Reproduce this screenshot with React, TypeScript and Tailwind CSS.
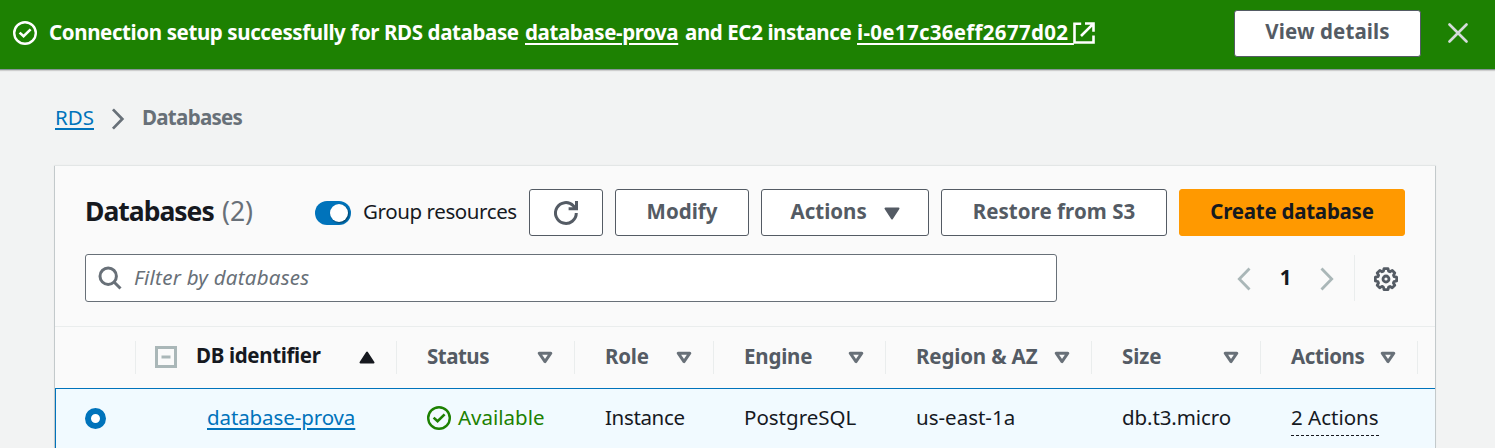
import type { ReactNode } from 'react';

function CheckCircle({ className }: { className: string }) {
  return (
    <svg viewBox="0 0 24 24" className={className} fill="none" stroke="currentColor">
      <circle cx="12" cy="12" r="10.8" strokeWidth="2.4" />
      <path d="M6.6 11.6 10.6 15.3 17.6 8.4" strokeWidth="2.6" />
    </svg>
  );
}

function Chevron({ className, flip = false, width = 3 }: { className: string; flip?: boolean; width?: number }) {
  return (
    <svg viewBox="0 0 14 24" className={className} fill="none" stroke="currentColor" strokeWidth={width}>
      <path d={flip ? 'M12.5 1.5 2.3 12 12.5 22.5' : 'M1.5 1.5 11.7 12 1.5 22.5'} />
    </svg>
  );
}

function SortDown() {
  return (
    <svg viewBox="0 0 16 13" className="h-[13px] w-4 shrink-0 text-[#687078]" fill="none" stroke="currentColor" strokeWidth="3" strokeLinejoin="round">
      <path d="M2.2 2.2H13.8L8 10.6Z" />
    </svg>
  );
}

function Button({ children, className }: { children: ReactNode; className: string }) {
  return (
    <button className={`flex h-[47px] shrink-0 items-center justify-center whitespace-nowrap rounded-[3px] border pb-[2px] text-[20.5px] font-bold ${className}`}>
      {children}
    </button>
  );
}

const outline = 'border-[#545b64] bg-white text-[#545b64]';

const columns = [
  { name: 'Status', style: 'tracking-[-0.5px]' },
  { name: 'Role', style: 'tracking-[-0.2px]' },
  { name: 'Engine', style: 'tracking-[-0.2px]' },
  { name: 'Region & AZ', style: 'tracking-[-0.15px]' },
  { name: 'Size', style: 'tracking-[-0.1px]' },
  { name: 'Actions', style: 'tracking-[-0.4px]' },
];

const grid = 'grid grid-cols-[81px_261px_178px_139px_172px_206px_169px_157px_17px]';

export default function App() {
  return (
    <div className="flex h-[448px] w-[1495px] flex-col overflow-hidden bg-[#f2f3f3] font-['Noto_Sans','Open_Sans',sans-serif] text-[20.5px] text-[#16191f]">
      <header className="flex h-[70px] shrink-0 items-center border-b border-[#879596] bg-[#1d8102] pl-[13px] pb-[3px] font-bold text-white shadow-[0_1px_1px_rgba(0,0,0,0.15)]">
        <CheckCircle className="mr-[12px] h-6 w-6 shrink-0" />
        <p className="flex whitespace-nowrap pb-[2px]">
          <span className="w-[476px] tracking-[-0.39px]">Connection setup successfully for RDS database</span>
          <a className="w-[154px] tracking-[-0.4px] underline decoration-2 underline-offset-[3px]">database-prova</a>
          <span className="w-[178px] pl-[6px] tracking-[-0.4px]">and EC2 instance</span>
          <a className="w-[216px] whitespace-pre tracking-[0.3px] underline decoration-2 underline-offset-[3px]">i-0e17c36eff2677d02 </a>
        </p>
        <svg viewBox="0 0 22 22" className="h-[22px] w-[22px] shrink-0" fill="none" stroke="currentColor" strokeWidth="2.6">
          <path d="M8.2 1.8H1.5V20.5H20.5V13.4M12 1.5H20.5V9.8M20.2 1.8 8 14" />
        </svg>
        <Button className={`ml-[139px] w-[187px] ${outline}`}>
          <span className="pb-[2px] tracking-[0.1px]">View details</span>
        </Button>
        <svg viewBox="0 0 20 20" className="ml-[27px] h-5 w-5 text-[#d5dbdb]" fill="none" stroke="currentColor" strokeWidth="2.6" strokeLinecap="round">
          <path d="M1.5 1.5 18.5 18.5M18.5 1.5 1.5 18.5" />
        </svg>
      </header>

      <nav className="flex h-[96px] shrink-0 items-center whitespace-nowrap pl-[55px]">
        <a className="pb-[2px] text-[#0073bb] underline decoration-2 underline-offset-[3px]">RDS</a>
        <Chevron className="ml-[17px] mt-[2px] h-[22px] w-[14px] text-[#687078]" />
        <span className="ml-[17px] pb-[2px] font-bold tracking-[-0.7px] text-[#687078]">Databases</span>
      </nav>

      <main className="ml-[54px] h-[282px] w-[1382px] border-x border-[#c3c9cb] bg-[#fafafa] shadow-[0_-1px_1px_rgba(0,28,36,0.06)]">
        <div className="flex h-[70px] items-end pl-[30px] whitespace-nowrap">
          <h1 className="flex h-[47px] w-[230px] items-center pb-[2px] text-[26.5px]">
            <span className="w-[137px] font-bold tracking-[-1px]">Databases</span>
            <span className="text-[#687078]">(2)</span>
          </h1>
          <div className="flex h-[47px] w-[214px] items-center">
            <span className="flex h-6 w-9 items-center justify-end rounded-full bg-[#0073bb] pr-[3px]">
              <span className="h-[18px] w-[18px] rounded-full bg-white shadow-[1px_1px_2px_rgba(0,28,36,0.6)]" />
            </span>
            <span className="ml-3 pb-[2px] tracking-[-0.4px]">Group resources</span>
          </div>
          <div className="flex gap-3">
            <Button className={`w-[74px] ${outline}`}>
              <svg viewBox="0 0 24 24" className="mt-[2px] h-6 w-6" fill="none" stroke="currentColor" strokeWidth="3">
                <path d="M22.3 11.9A10.4 10.4 0 1 1 19.3 4.7L22 7.5M22.5 0V7.8H14.6" />
              </svg>
            </Button>
            <Button className={`w-[134px] ${outline}`}>Modify</Button>
            <Button className={`w-[168px] ${outline}`}>
              <span className="w-[92px] text-left">Actions</span>
              <svg viewBox="0 0 16 13" className="ml-px mt-[3px] h-[13px] w-4" fill="currentColor" stroke="currentColor" strokeWidth="2" strokeLinejoin="round">
                <path d="M1.5 1.5H14.5L8 11.5Z" />
              </svg>
            </Button>
            <Button className={`w-[226px] tracking-[0.05px] ${outline}`}>Restore from S3</Button>
            <Button className="w-[226px] border-[#ff9900] bg-[#ff9900] tracking-[-0.25px] text-[#16191f]">Create database</Button>
          </div>
        </div>

        <div className="mt-[18px] flex h-12 items-center pl-[30px]">
          <div className="flex h-12 w-[972px] items-center rounded-[3px] border border-[#687078] bg-white pl-[12px] text-[#687078]">
            <svg viewBox="0 0 24 24" className="h-6 w-6" fill="none" stroke="currentColor" strokeWidth="3">
              <circle cx="10.2" cy="10.2" r="8.2" />
              <path d="m16 16 6.5 6.5" />
            </svg>
            <span className="ml-[12px] whitespace-nowrap pb-[2px] italic tracking-[0.25px]">Filter by databases</span>
          </div>
          <Chevron flip width={2.8} className="ml-[180px] mt-[2px] h-6 w-[14px] text-[#aab7b8]" />
          <span className="w-[69px] pb-[2px] text-center font-bold">1</span>
          <Chevron width={2.8} className="mt-[2px] h-6 w-[14px] text-[#aab7b8]" />
          <span className="ml-5 h-[46px] w-px bg-[#eaeded]" />
          <svg viewBox="0 0 24 24" className="ml-[19px] mt-[2px] h-6 w-6 text-[#545b64]" fill="none" stroke="currentColor" strokeWidth="2.8" strokeLinejoin="round">
            <path d="M10 1.6h4l.6 2.6 1.4.6 2.3-1.4 2.5 2.5-1.3 2.3.6 1.4 2.5.6v3.8l-2.6.6-.6 1.4 1.4 2.3-2.6 2.5-2.2-1.3-1.4.6-.6 2.5h-4l-.6-2.6-1.4-.6-2.3 1.4-2.5-2.5 1.3-2.3-.6-1.4-2.5-.6v-3.8l2.6-.6.6-1.4-1.4-2.3 2.6-2.5L8 4.8l1.4-.6Z" />
            <circle cx="12" cy="12" r="3" />
          </svg>
        </div>

        <div className={`mt-6 h-[62px] border-t border-[#eaeded] pt-[14px] ${grid}`}>
          <div className="h-[33px] border-r border-[#eaeded]" />
          <div className="flex h-[33px] items-center whitespace-nowrap border-r border-[#eaeded] pl-[19px] pr-[21px] font-bold">
            <svg viewBox="0 0 22 22" className="mb-[2px] h-[22px] w-[22px] text-[#aab7b8]" fill="none" stroke="currentColor" strokeWidth="3">
              <path d="M1.5 1.5h19v19h-19zM6.5 11h9" />
            </svg>
            <span className="ml-[19px] pb-[4px] tracking-[-0.35px]">DB identifier</span>
            <svg viewBox="0 0 16 13" className="ml-auto h-[13px] w-4" fill="currentColor" stroke="currentColor" strokeWidth="2" strokeLinejoin="round">
              <path d="M1.5 11.5H14.5L8 1.5Z" />
            </svg>
          </div>
          {columns.map((c) => (
            <div key={c.name} className="flex h-[33px] items-center justify-between whitespace-nowrap border-r border-[#eaeded] pl-[30px] pr-[21px] font-bold text-[#545b64]">
              <span className={`pb-[2px] ${c.style}`}>{c.name}</span>
              <SortDown />
            </div>
          ))}
        </div>

        <div className={`h-[60px] items-center whitespace-nowrap border-l border-t border-[#0073bb] bg-[#f1faff] ${grid}`}>
          <div className="pl-[29px]">
            <span className="block h-[21px] w-[21px] rounded-full border-[6.5px] border-[#0073bb] bg-white" />
          </div>
          <a className="pb-[2px] pl-[70px] tracking-[-0.1px] text-[#0073bb] underline decoration-2 underline-offset-[3px]">database-prova</a>
          <div className="flex items-center pb-[2px] pl-[29px] text-[#1d8102]">
            <CheckCircle className="mr-[7px] h-6 w-6 shrink-0" />
            <span>Available</span>
          </div>
          <div className="pb-[2px] pl-[29px] tracking-[-0.35px]">Instance</div>
          <div className="pb-[2px] pl-[29px]">PostgreSQL</div>
          <div className="pb-[2px] pl-[29px]">us-east-1a</div>
          <div className="pb-[2px] pl-[29px] tracking-[-0.1px]">db.t3.micro</div>
          <div className="pl-[29px]">
            <span className="inline-block h-[34px] w-[88px] border-b border-dashed border-[#16191f]">2 Actions</span>
          </div>
        </div>
      </main>
    </div>
  );
}
